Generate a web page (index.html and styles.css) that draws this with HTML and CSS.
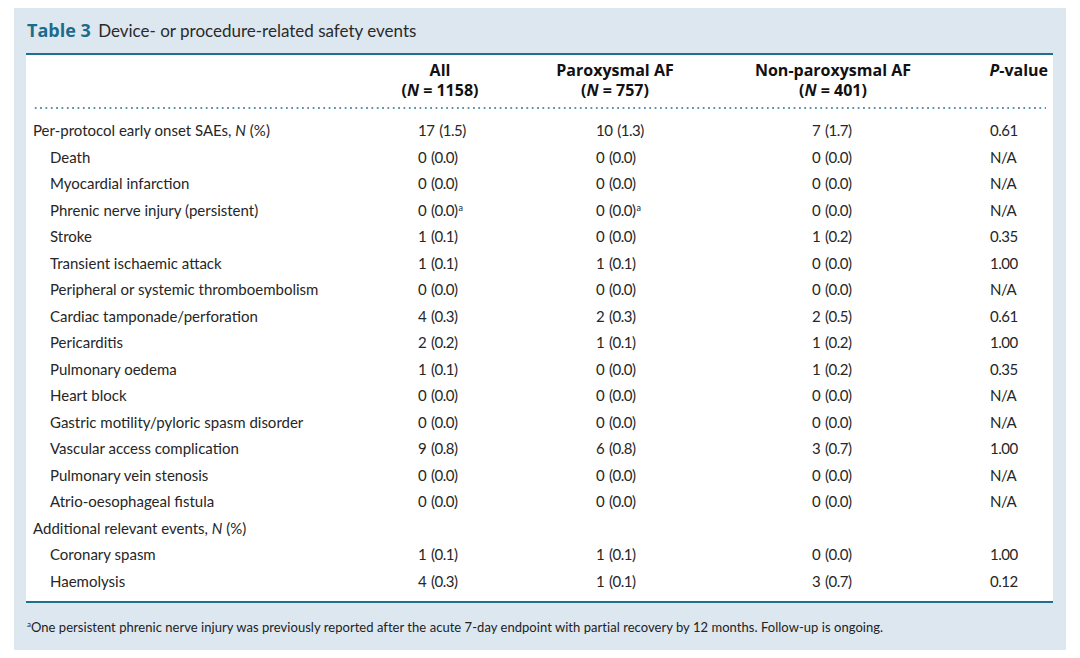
FILE: index.html
```html
<!DOCTYPE html>
<html lang="en">
<head>
<meta charset="utf-8">
<title>Table 3</title>
<link rel="stylesheet" href="styles.css">
</head>
<body>
<div class="panel">
  <div class="caption"><span class="label">Table 3</span> Device- or procedure-related safety events</div>
  <div class="box">
    <div class="grid head">
      <div></div>
      <div class="h c1">All<br>(<i>N</i>&nbsp;=&nbsp;1158)</div>
      <div class="h c2">Paroxysmal AF<br>(<i>N</i>&nbsp;=&nbsp;757)</div>
      <div class="h c3">Non-paroxysmal AF<br>(<i>N</i>&nbsp;=&nbsp;401)</div>
      <div class="h c4"><i>P</i>-value</div>
    </div>
    <div class="dots"></div>
    <div class="body">
      <div class="grid row"><div class="l1">Per-protocol early onset SAEs, <i>N</i> (%)</div><div class="v1">17 (1.5)</div><div class="v2">10 (1.3)</div><div class="v3">7 (1.7)</div><div class="v4">0.61</div></div>
      <div class="grid row"><div class="l2">Death</div><div class="v1">0 (0.0)</div><div class="v2">0 (0.0)</div><div class="v3">0 (0.0)</div><div class="v4">N/A</div></div>
      <div class="grid row"><div class="l2">Myocardial infarction</div><div class="v1">0 (0.0)</div><div class="v2">0 (0.0)</div><div class="v3">0 (0.0)</div><div class="v4">N/A</div></div>
      <div class="grid row"><div class="l2">Phrenic nerve injury (persistent)</div><div class="v1">0 (0.0)<sup>a</sup></div><div class="v2">0 (0.0)<sup>a</sup></div><div class="v3">0 (0.0)</div><div class="v4">N/A</div></div>
      <div class="grid row"><div class="l2">Stroke</div><div class="v1">1 (0.1)</div><div class="v2">0 (0.0)</div><div class="v3">1 (0.2)</div><div class="v4">0.35</div></div>
      <div class="grid row"><div class="l2">Transient ischaemic attack</div><div class="v1">1 (0.1)</div><div class="v2">1 (0.1)</div><div class="v3">0 (0.0)</div><div class="v4">1.00</div></div>
      <div class="grid row"><div class="l2">Peripheral or systemic thromboembolism</div><div class="v1">0 (0.0)</div><div class="v2">0 (0.0)</div><div class="v3">0 (0.0)</div><div class="v4">N/A</div></div>
      <div class="grid row"><div class="l2">Cardiac tamponade/perforation</div><div class="v1">4 (0.3)</div><div class="v2">2 (0.3)</div><div class="v3">2 (0.5)</div><div class="v4">0.61</div></div>
      <div class="grid row"><div class="l2">Pericarditis</div><div class="v1">2 (0.2)</div><div class="v2">1 (0.1)</div><div class="v3">1 (0.2)</div><div class="v4">1.00</div></div>
      <div class="grid row"><div class="l2">Pulmonary oedema</div><div class="v1">1 (0.1)</div><div class="v2">0 (0.0)</div><div class="v3">1 (0.2)</div><div class="v4">0.35</div></div>
      <div class="grid row"><div class="l2">Heart block</div><div class="v1">0 (0.0)</div><div class="v2">0 (0.0)</div><div class="v3">0 (0.0)</div><div class="v4">N/A</div></div>
      <div class="grid row"><div class="l2">Gastric motility/pyloric spasm disorder</div><div class="v1">0 (0.0)</div><div class="v2">0 (0.0)</div><div class="v3">0 (0.0)</div><div class="v4">N/A</div></div>
      <div class="grid row"><div class="l2">Vascular access complication</div><div class="v1">9 (0.8)</div><div class="v2">6 (0.8)</div><div class="v3">3 (0.7)</div><div class="v4">1.00</div></div>
      <div class="grid row"><div class="l2">Pulmonary vein stenosis</div><div class="v1">0 (0.0)</div><div class="v2">0 (0.0)</div><div class="v3">0 (0.0)</div><div class="v4">N/A</div></div>
      <div class="grid row"><div class="l2">Atrio-oesophageal fistula</div><div class="v1">0 (0.0)</div><div class="v2">0 (0.0)</div><div class="v3">0 (0.0)</div><div class="v4">N/A</div></div>
      <div class="grid row"><div class="l1">Additional relevant events, <i>N</i> (%)</div><div></div><div></div><div></div><div></div></div>
      <div class="grid row"><div class="l2">Coronary spasm</div><div class="v1">1 (0.1)</div><div class="v2">1 (0.1)</div><div class="v3">0 (0.0)</div><div class="v4">1.00</div></div>
      <div class="grid row"><div class="l2">Haemolysis</div><div class="v1">4 (0.3)</div><div class="v2">1 (0.1)</div><div class="v3">3 (0.7)</div><div class="v4">0.12</div></div>
    </div>
  </div>
  <div class="footnote"><sup>a</sup>One persistent phrenic nerve injury was previously reported after the acute 7-day endpoint with partial recovery by 12 months. Follow-up is ongoing.</div>
</div>
</body>
</html>
```
FILE: styles.css
```css
html, body {
  margin: 0;
  padding: 0;
  background: #ffffff;
}
body {
  font-family: Lato, "Open Sans", "Liberation Sans", sans-serif;
  color: #222222;
}
.panel {
  margin: 8px 0 0 14px;
  width: 1052px;
  height: 642px;
  background: #dde7f0;
  display: flex;
  flex-direction: column;
}
.caption {
  height: 45px;
  box-sizing: border-box;
  padding: 11px 0 0 13px;
  font-size: 17px;
  line-height: 22px;
  color: #2a2a2a;
}
.caption .label {
  font-family: "Open Sans", Lato, sans-serif;
  font-size: 18px;
  font-weight: 700;
  color: #1b6b8c;
  margin-right: 3px;
}
.box {
  margin: 0 13px 0 12px;
  background: #ffffff;
  border-top: 2px solid #1f6f8e;
  border-bottom: 2px solid #1f6f8e;
  padding-bottom: 7px;
}
.grid {
  display: grid;
  grid-template-columns: 354px 120px 230px 206px 117px;
}
.head {
  padding: 5px 0 7px 0;
  font-family: "Open Sans", Lato, sans-serif;
  font-size: 16px;
  line-height: 20px;
  font-weight: 700;
  color: #111111;
}
.h { text-align: center; white-space: nowrap; }
.h.c4 { text-align: right; padding-right: 5px; }
.dots {
  margin: 0 7px 0 7px;
  height: 2px;
  background-image: radial-gradient(circle, #5b93ad 0.9px, transparent 1.2px);
  background-size: 5.35px 2px;
  background-repeat: repeat-x;
}
.body {
  padding-top: 8px;
}
.row {
  font-size: 15px;
  line-height: 26.5px;
  height: 26.5px;
  color: #262626;
}
.l1 { padding-left: 7px; }
.l2 { padding-left: 24px; }
.v1, .v2, .v3, .v4 { letter-spacing: -0.5px; word-spacing: 1.5px; white-space: nowrap; }
.v1 { padding-left: 38px; }
.v2 { padding-left: 96px; }
.v3 { padding-left: 82px; }
.v4 { padding-left: 54px; }
sup {
  font-size: 9px;
  line-height: 0;
  vertical-align: 5px;
  letter-spacing: 0;
  margin-left: 1px;
}
.footnote {
  padding: 15px 0 0 13px;
  font-size: 13px;
  line-height: 18px;
  letter-spacing: 0.04px;
  color: #222222;
}
.footnote sup {
  font-size: 8px;
  vertical-align: 5px;
  margin-left: 0;
}
```
